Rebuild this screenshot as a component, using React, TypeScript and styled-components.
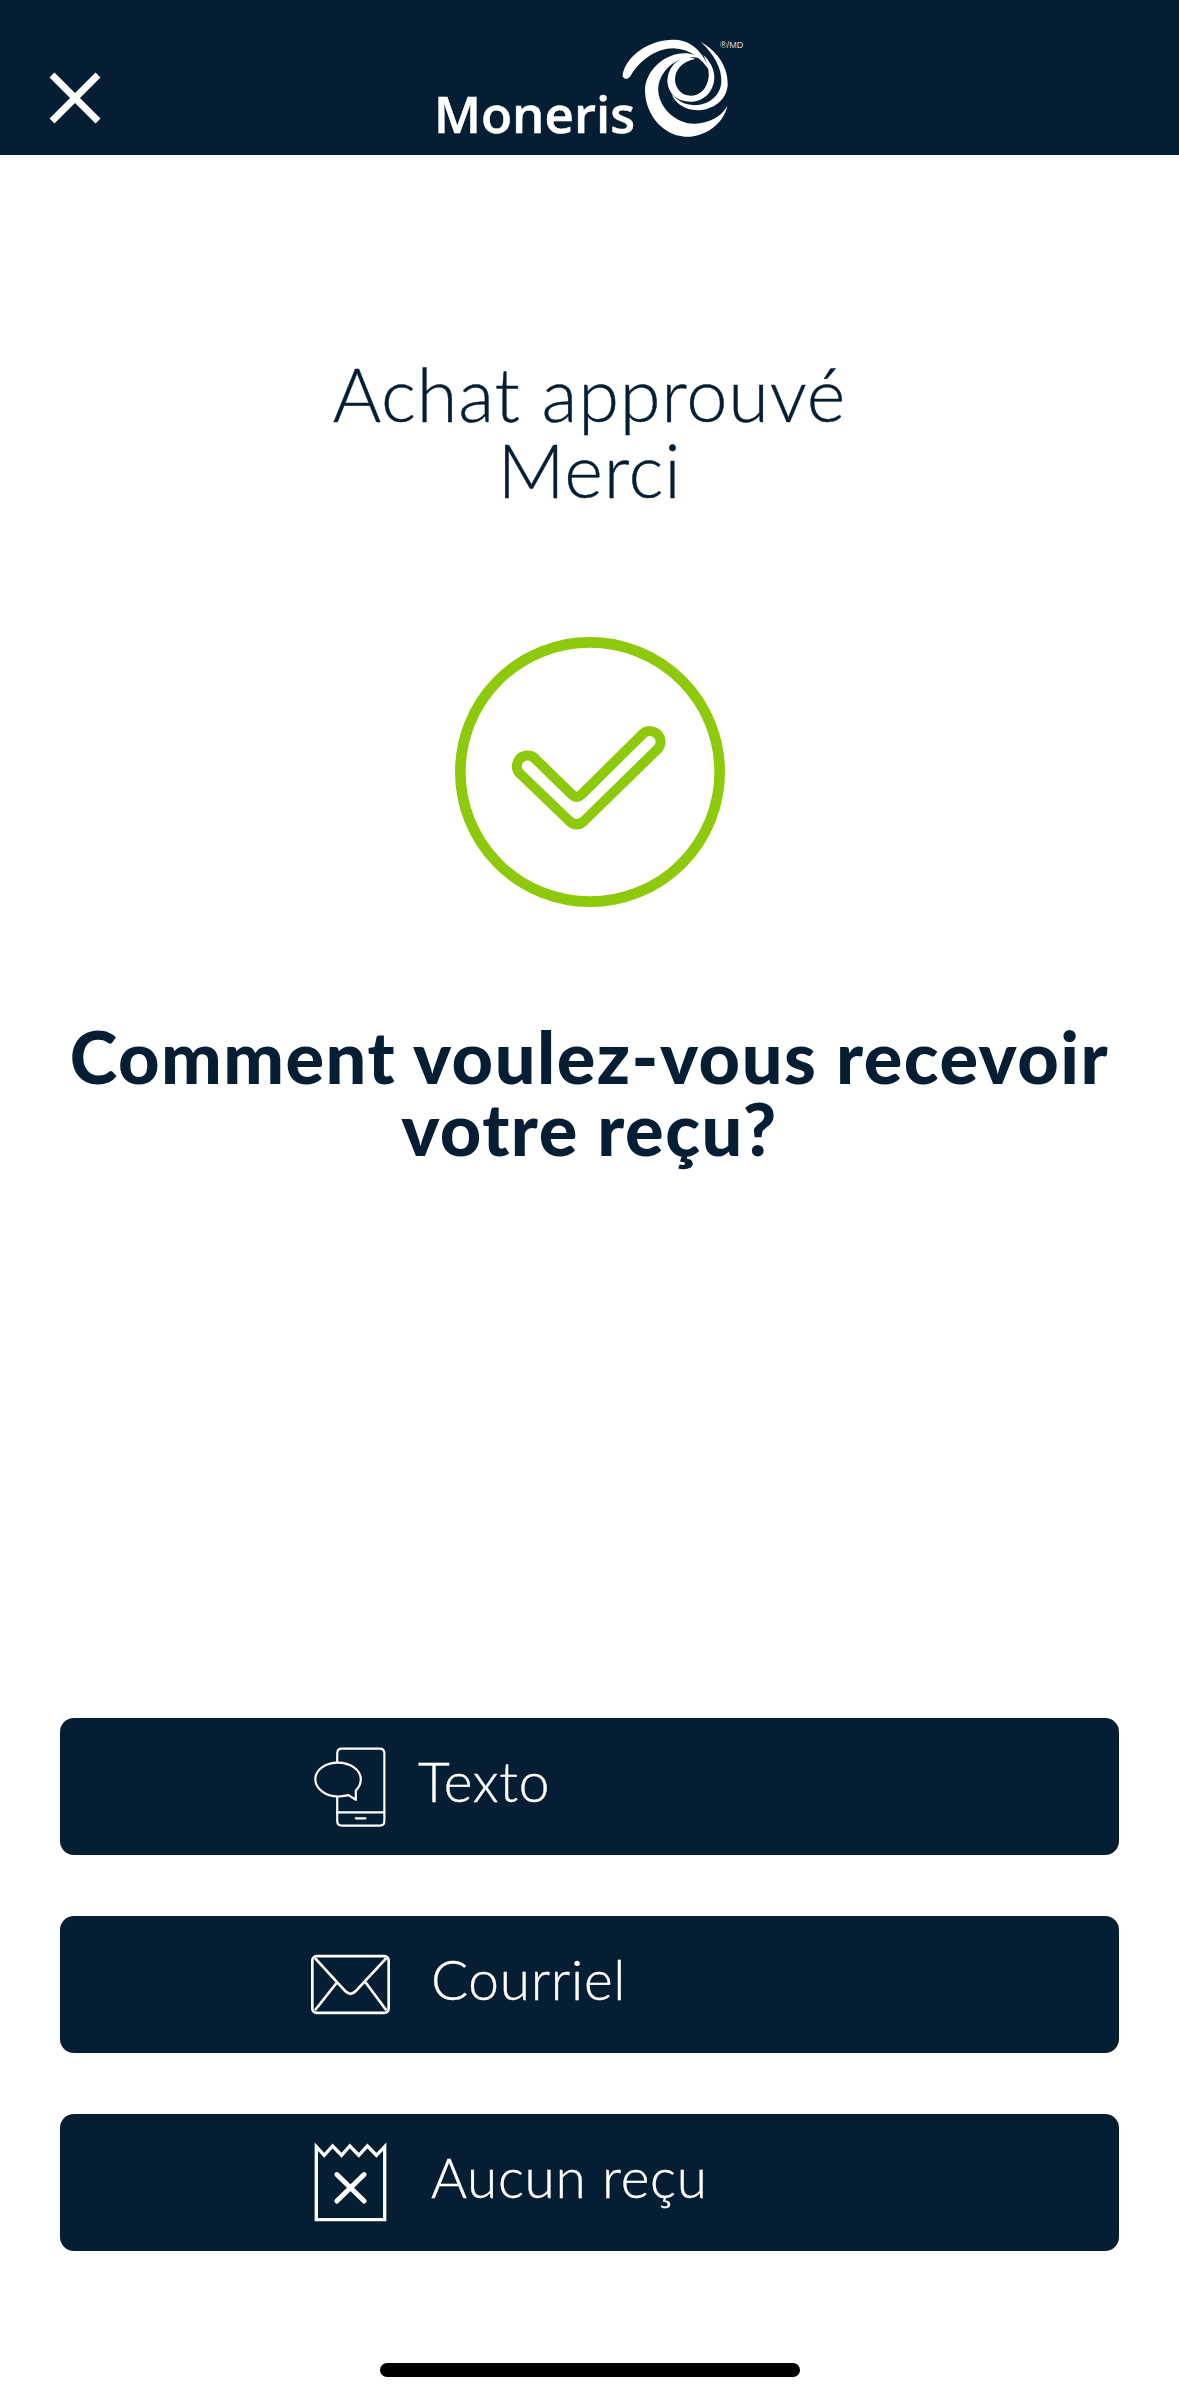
import React from "react";
import styled, { createGlobalStyle } from "styled-components";

const Global = createGlobalStyle`
  html, body { margin: 0; padding: 0; background: #fff; }
  body { font-family: "Lato", "Liberation Sans", sans-serif; }
`;

const Page = styled.div`
  width: 1179px;
  height: 2402px;
  display: flex;
  flex-direction: column;
  background: #fff;
  color: #061e33;
  overflow: hidden;
`;

const Header = styled.header`
  height: 155px;
  flex: none;
  background: #061e33;
  display: flex;
  align-items: flex-start;
  box-sizing: border-box;
  padding: 0 0 0 46px;
`;

const CloseIcon = styled.svg`
  width: 58px;
  height: 58px;
  margin-top: 69px;
  display: block;
  flex: none;
`;

const Logo = styled.div`
  display: flex;
  align-items: flex-start;
  margin-left: 330px;
  color: #fff;
  position: relative;
`;

const LogoWord = styled.span`
  font-family: "Open Sans", sans-serif;
  font-weight: 600;
  font-size: 51px;
  line-height: 60px;
  margin-top: 83px;
  width: 186px;
  -webkit-text-stroke: 0.5px #fff;
`;

const Swirl = styled.svg`
  width: 115px;
  height: 105px;
  margin-top: 35px;
  display: block;
  flex: none;
`;

const Registered = styled.span`
  position: absolute;
  left: 286px;
  top: 40px;
  font-family: "Liberation Sans", sans-serif;
  font-size: 9px;
  line-height: 10px;
  color: #d5dbe0;
  white-space: nowrap;
`;

const Main = styled.main`
  flex: 1;
  display: flex;
  flex-direction: column;
  align-items: center;
`;

const Title = styled.h1`
  margin: 201px 0 0;
  font-weight: 300;
  font-size: 74px;
  letter-spacing: 0.8px;
  line-height: 76px;
  text-align: center;
  -webkit-text-stroke: 0.4px #061e33;
`;

const SuccessIcon = styled.svg`
  width: 280px;
  height: 280px;
  margin-top: 124px;
  display: block;
`;

const Question = styled.h2`
  margin: 108px 0 0;
  font-weight: 900;
  font-size: 72px;
  letter-spacing: 1.5px;
  line-height: 72px;
  text-align: center;
`;

const Actions = styled.div`
  flex: none;
  display: flex;
  flex-direction: column;
  gap: 61px;
  padding: 0 60px;
`;

const ActionButton = styled.button<{ $pad: number; $gap: number }>`
  height: 137px;
  border: 0;
  border-radius: 14px;
  background: #061e33;
  color: #fff;
  display: flex;
  align-items: center;
  box-sizing: border-box;
  padding: 0 0 0 ${(p) => p.$pad}px;
  gap: ${(p) => p.$gap}px;
  font-family: "Lato", sans-serif;
  font-weight: 300;
  font-size: 55px;
  letter-spacing: 0.7px;
  -webkit-text-stroke: 0.4px #fff;
`;

const ActionLabel = styled.span`
  display: block;
  line-height: 60px;
  margin-top: -12px;
`;

const ActionIcon = styled.svg`
  display: block;
  flex: none;
`;

const HomeBar = styled.div`
  flex: none;
  width: 420px;
  height: 14px;
  border-radius: 7px;
  background: #000;
  margin: 112px auto 25px;
`;

export default function App() {
  return (
    <Page>
      <Global />
      <Header>
        <CloseIcon viewBox="0 0 58 58" aria-hidden="true">
          <path d="M6 6 L52 52 M52 6 L6 52" stroke="#fff" strokeWidth="7" fill="none" />
        </CloseIcon>
        <Logo>
          <LogoWord>Moneris</LogoWord>
          <Swirl viewBox="0 0 345 315" aria-hidden="true">
            <g fill="#fff">
              <path d="M8 118 C20 60 90 12 165 14 C215 16 250 50 272 112 C245 70 210 42 160 40 C110 40 60 75 32 122 C24 136 6 134 8 118 Z" />
              <path d="M322 212 C310 270 250 308 195 305 C125 300 75 235 75 165 C76 110 130 55 195 55 C215 55 232 62 245 72 C225 64 205 64 188 70 C150 85 112 120 115 170 C120 225 175 268 225 266 C265 265 305 245 322 212 Z" />
              <path d="M243 22 C295 50 325 100 323 150 C320 195 280 225 232 226 C195 225 165 205 155 178 C175 200 200 213 232 210 C270 206 302 180 304 140 C306 100 280 55 243 22 Z" />
              <path d="M195 66 C165 75 142 105 142 140 C145 175 170 200 212 200 C250 200 283 170 283 125 C283 105 272 80 250 60 C262 85 268 105 266 125 C262 160 240 182 212 182 C185 182 166 160 165 135 C165 105 185 80 225 72 C215 66 205 65 195 66 Z" />
            </g>
          </Swirl>
          <Registered>®/MD</Registered>
        </Logo>
      </Header>
      <Main>
        <Title>
          Achat approuvé
          <br />
          Merci
        </Title>
        <SuccessIcon viewBox="90 65 840 840" aria-hidden="true">
          <circle cx="510" cy="485" r="389" fill="none" stroke="#8fc90c" strokeWidth="32" />
          <path
            d="M342 442 L455 552 Q470 566 485 552 L670 369 A32 32 0 0 1 714 415 L492 632 Q470 652 448 632 L298 488 A32 32 0 0 1 342 442 Z"
            fill="none"
            stroke="#8fc90c"
            strokeWidth="30"
            strokeLinejoin="round"
          />
        </SuccessIcon>
        <Question>
          Comment voulez-vous recevoir
          <br />
          votre reçu?
        </Question>
      </Main>
      <Actions>
        <ActionButton $pad={252} $gap={29}>
          <ActionIcon width="77" height="83" viewBox="95 75 230 250" aria-hidden="true">
            <g fill="none" stroke="#fff" strokeWidth="6.5" strokeLinejoin="round" strokeLinecap="round">
              <path d="M170 126 V100 Q170 86 184 86 H298 Q312 86 312 100 V304 Q312 318 298 318 H184 Q170 318 170 304 V232" />
              <path d="M170 278 H312" />
              <path d="M226 296 H255" />
              <path d="M172 128 C135 128 104 150 104 178 C104 206 135 230 172 230 C182 230 194 228 204 226 L226 240 L226 212 C236 202 241 190 241 178 C241 150 209 128 172 128 Z" />
            </g>
          </ActionIcon>
          <ActionLabel>Texto</ActionLabel>
        </ActionButton>
        <ActionButton $pad={249} $gap={39}>
          <ActionIcon width="83" height="65" viewBox="85 95 250 195" aria-hidden="true">
            <g fill="none" stroke="#fff" strokeWidth="8" strokeLinejoin="round">
              <rect x="95" y="107" width="230" height="171" rx="13" />
              <path d="M103 113 L195 213 Q210 228 225 213 L318 113" />
              <path d="M103 270 L168 188 M254 184 L318 270" />
            </g>
          </ActionIcon>
          <ActionLabel>Courriel</ActionLabel>
        </ActionButton>
        <ActionButton $pad={252} $gap={42}>
          <ActionIcon width="77" height="83" viewBox="92 665 230 250" aria-hidden="true">
            <path
              d="M104 682 L128 708 L153 680 L180 708 L205 680 L232 708 L258 680 L285 708 L310 682 V902 H104 Z"
              fill="none"
              stroke="#fff"
              strokeWidth="10"
            />
            <path d="M166 766 L248 846 M248 766 L166 846" stroke="#fff" strokeWidth="15" strokeLinecap="round" />
          </ActionIcon>
          <ActionLabel>Aucun reçu</ActionLabel>
        </ActionButton>
      </Actions>
      <HomeBar />
    </Page>
  );
}
